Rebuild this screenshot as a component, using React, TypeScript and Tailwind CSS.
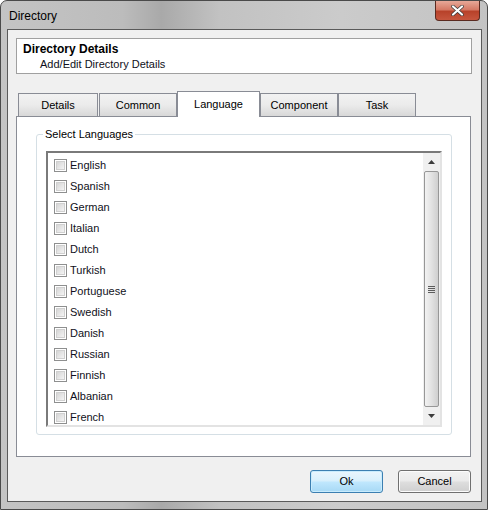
import { useState } from 'react';

const LANGUAGES = [
  'English',
  'Spanish',
  'German',
  'Italian',
  'Dutch',
  'Turkish',
  'Portuguese',
  'Swedish',
  'Danish',
  'Russian',
  'Finnish',
  'Albanian',
  'French',
];

const TABS = [
  { label: 'Details', width: 'w-[80px]', gap: 'mr-[1px]' },
  { label: 'Common', width: 'w-[78px]', gap: '' },
  { label: 'Language', width: 'w-[83px]', gap: '' },
  { label: 'Component', width: 'w-[78px]', gap: '' },
  { label: 'Task', width: 'w-[78px]', gap: '' },
];

const font = "font-['Liberation_Sans',Arial,sans-serif]";

function CheckBox({ checked, onToggle, label }: { checked: boolean; onToggle: () => void; label: string }) {
  return (
    <div className="flex h-[21px] items-center pl-[6px]" onClick={onToggle}>
      <div className="flex h-[13px] w-[13px] items-center justify-center border border-[#8e8f8f] bg-white p-[1px]">
        <div className="h-full w-full border border-[#d0d0d0] bg-gradient-to-br from-[#d6d6d6] to-[#f4f4f4]">
          {checked && (
            <svg viewBox="0 0 9 9" className="h-full w-full">
              <path d="M1.5 4.5 L3.5 6.5 L7.5 2" fill="none" stroke="#1c3f6e" strokeWidth="1.6" />
            </svg>
          )}
        </div>
      </div>
      <span className="ml-[3px] text-[11px] text-[#101020]">{label}</span>
    </div>
  );
}

function ScrollBar() {
  return (
    <div className="flex w-[17px] flex-col bg-[#f0f0f0]">
      <div className="flex h-[18px] items-center justify-center">
        <svg width="7" height="4" viewBox="0 0 7 4">
          <path d="M0 4 L3.5 0 L7 4 Z" fill="#3c3c3c" />
        </svg>
      </div>
      <div className="mx-[1px] flex flex-1 items-center justify-center rounded-[2px] border border-[#979797] bg-gradient-to-r from-[#f2f2f2] via-[#e2e2e2] to-[#cfcfcf]">
        <div className="flex flex-col gap-[1px]">
          <div className="h-px w-[7px] bg-[#5c5c5c]" />
          <div className="h-px w-[7px] bg-[#5c5c5c]" />
          <div className="h-px w-[7px] bg-[#5c5c5c]" />
          <div className="h-px w-[7px] bg-[#5c5c5c]" />
        </div>
      </div>
      <div className="flex h-[18px] items-center justify-center">
        <svg width="7" height="4" viewBox="0 0 7 4">
          <path d="M0 0 L7 0 L3.5 4 Z" fill="#3c3c3c" />
        </svg>
      </div>
    </div>
  );
}

export default function App() {
  const [checked, setChecked] = useState<Record<string, boolean>>({});

  return (
    <div className={`${font} relative flex h-[510px] w-[488px] flex-col overflow-hidden rounded-t-[7px] border border-[#4a4a4a] bg-[linear-gradient(90deg,#c4c4c4_0%,#bcbcbc_25%,#a9a9a9_33%,#c2c2c2_45%,#cbcbcb_70%,#c3c3c3_100%)]`}>
      {/* title bar */}
      <div className="flex h-[28px] items-start justify-between">
        <span className="pl-[8px] pt-[6px] text-[12px] text-black">Directory</span>
        <button className="mr-[7px] flex h-[20px] w-[45px] items-center justify-center rounded-b-[4px] border border-t-0 border-[#5a2a20] bg-[linear-gradient(180deg,#e7a898_0%,#d57a66_45%,#b8422a_55%,#c6563e_100%)]">
          <svg width="13" height="11" viewBox="0 0 13 11">
            <path d="M2 1.5 L11 9.5 M11 1.5 L2 9.5" stroke="#3a3a3a" strokeWidth="3.6" strokeLinecap="round" />
            <path d="M2 1.5 L11 9.5 M11 1.5 L2 9.5" stroke="#ffffff" strokeWidth="2.2" strokeLinecap="round" />
          </svg>
        </button>
      </div>

      {/* client area */}
      <div className="mb-[7px] ml-[6px] mr-[5px] flex flex-1 flex-col border border-[#5a5a5a] bg-[#f0f0f0] pl-[8px] pt-[8px]">
        <div className="h-[36px] w-[456px] border border-[#a0a0a0] bg-white pl-[6px] pt-[3px]">
          <div className="text-[12px] font-bold leading-[15px] text-black">Directory Details</div>
          <div className="pl-[17px] text-[11px] leading-[15px] text-[#101020]">Add/Edit Directory Details</div>
        </div>

        {/* tabs */}
        <div className="mt-[17px] flex h-[25px] items-end pl-[2px]">
          {TABS.map((t) =>
            t.label === 'Language' ? (
              <div
                key={t.label}
                className={`${t.width} relative z-10 -mb-px flex h-[26px] items-start justify-center border border-b-0 border-[#898c95] bg-white pt-[4px] text-[11px] text-black`}
              >
                {t.label}
              </div>
            ) : (
              <div
                key={t.label}
                className={`${t.width} ${t.gap} flex h-[23px] items-center justify-center border border-b-0 border-[#898c95] bg-gradient-to-b from-[#f2f2f2] via-[#ebebeb] to-[#d8d8d8] pt-[1px] text-[11px] text-black`}
              >
                {t.label}
              </div>
            ),
          )}
        </div>
        <div className="h-[341px] w-[455px] border border-[#898c95] bg-white pl-[19px] pt-[17px]">
          {/* group box */}
          <div className="relative h-[301px] w-[416px] rounded-[3px] border border-[#d5dfe5] pl-[9px] pt-[16px]">
            <span className="absolute -top-[8px] left-[6px] bg-white px-[2px] text-[11px] leading-[14px] text-black">
              Select Languages
            </span>
            <div className="flex h-[276px] w-[396px] border-2 border-b-[#e3e3e3] border-l-[#7a7a7a] border-r-[#e3e3e3] border-t-[#7a7a7a] bg-white">
              <div className="flex-1 pt-[2px]">
                {LANGUAGES.map((l) => (
                  <CheckBox
                    key={l}
                    label={l}
                    checked={!!checked[l]}
                    onToggle={() => setChecked((c) => ({ ...c, [l]: !c[l] }))}
                  />
                ))}
              </div>
              <ScrollBar />
            </div>
          </div>
        </div>

        {/* buttons */}
        <div className="mt-[13px] flex justify-end gap-[15px] pr-[10px]">
          <button className="h-[23px] w-[73px] rounded-[3px] border border-[#3c7fb1] bg-[linear-gradient(180deg,#eaf6fd_0%,#d9f0fc_45%,#bee6fd_55%,#a7d9f5_100%)] text-[11px] text-black shadow-[inset_0_0_0_1px_#c9ecfd]">
            Ok
          </button>
          <button className="h-[23px] w-[73px] rounded-[3px] border border-[#707070] bg-[linear-gradient(180deg,#f2f2f2_0%,#ebebeb_45%,#dddddd_55%,#cfcfcf_100%)] text-[11px] text-black shadow-[inset_0_0_0_1px_#fcfcfc]">
            Cancel
          </button>
        </div>
      </div>
    </div>
  );
}
